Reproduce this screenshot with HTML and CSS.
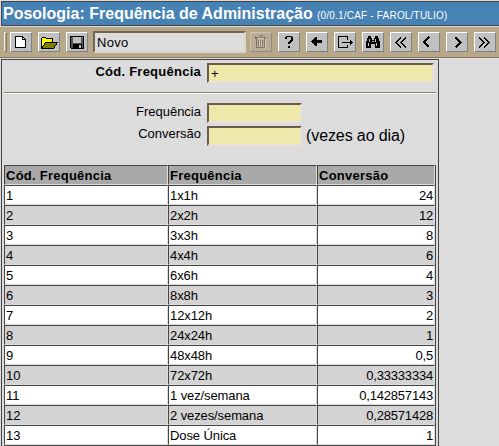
FILE: index.html
```html
<!DOCTYPE html>
<html lang="pt-BR">
<head>
<meta charset="utf-8">
<title>Posologia: Frequência de Administração</title>
<link rel="stylesheet" href="styles.css">
</head>
<body>
<header class="title"><h1>Posologia: Frequência de Administração</h1><span class="version">(0/0.1/CAF - FAROL/TULIO)</span></header>
<nav class="toolbar">
  <span class="grip"></span>
  <div class="group">
    <button class="btn" aria-label="Novo"><svg viewBox="0 0 20 18"><path d="M4.5 3.500h7l3 3v8h-10z" fill="#fff" stroke="#000"/><path d="M11.500 3.500v3h3" fill="none" stroke="#000"/></svg></button>
    <button class="btn" aria-label="Abrir"><svg viewBox="0 0 20 18"><path d="M2.500 14.500v-9l1-1h3l1 1h6v4h-6z" fill="#ff0" stroke="#000"/><path d="M2.500 15.500l4-6h12l-4 6z" fill="#808000" stroke="#000"/></svg></button>
    <button class="btn" aria-label="Salvar"><svg viewBox="0 0 20 18"><path d="M3.500 3.500h13v12h-12l-1-1z" fill="#555" stroke="#000"/><path d="M6 4h8v6H6z" fill="#c0c0c0"/><path d="M6 11h9v5H6z" fill="#000"/><path d="M12 12h2v3h-2zM15 4h1v1h-1z" fill="#c0c0c0"/></svg></button>
  </div>
  <input class="mode" value="Novo" readonly>
  <div class="group">
    <button class="btn off" aria-label="Excluir"><svg viewBox="0 0 20 18"><path d="M4 4.500h11M7.500 2.500h4M4.500 3v3M5.500 5v9.500h8V5M7.500 7v6M9.500 7v6M11.500 7v6" fill="none" stroke="#807765"/><path d="M6.500 5.500h6M8.500 7v6M10.500 7v6M14.500 6v9" fill="none" stroke="#d8cfbc"/></svg></button>
    <button class="btn" aria-label="Ajuda"><svg viewBox="0 0 20 18"><path d="M6 6V4h1V3h6v1h1v4h-1v1h-1v1h-1v1H9V9h1V8h1V7h1V4H8v2zM9 13h2v2H9z"/></svg></button>
    <button class="btn" aria-label="Voltar"><svg viewBox="0 0 20 18"><path d="M4 8h1V7h1V6h1V5h1V4h2v3h5v3h-5v3H8v-1H7v-1H6v-1H5V9H4z"/></svg></button>
    <button class="btn" aria-label="Sair"><svg viewBox="0 0 20 18"><path d="M12.500 7V3.500h-9v11h9V12M7 9.500h10" fill="none" stroke="#000"/><path d="M15 7h1v1h1v1h1v1h-1v1h-1v1h-1z"/></svg></button>
    <button class="btn" aria-label="Localizar"><svg viewBox="0 0 20 18"><path d="M5 3h3v2h1v2h2V5h1V3h3v2h1v3h1v7h-5v-4H8v4H3V8h1V5h1z"/><path d="M6 6h1v3H6zM5 10h1v3H5zM12 6h1v3h-1zM13 10h1v3h-1zM9 8h2v1H9z" fill="#c0c0c0"/></svg></button>
    <button class="btn" aria-label="Primeiro"><svg viewBox="0 0 20 18"><path d="M10 4.500l-5 5 5 5M15 4.500l-5 5 5 5" class="arrow"/></svg></button>
    <button class="btn" aria-label="Anterior"><svg viewBox="0 0 20 18"><path d="M10 4l-5 5 5 5" class="arrow"/></svg></button>
    <button class="btn" aria-label="Próximo"><svg viewBox="0 0 20 18"><path d="M8.500 4.500l5 5-5 5" class="arrow"/></svg></button>
    <button class="btn" aria-label="Último"><svg viewBox="0 0 20 18"><path d="M4 4.500l5 5-5 5M9 4.500l5 5-5 5" class="arrow"/></svg></button>
  </div>
</nav>
<main class="panel">
  <form class="form">
    <div class="field key"><label for="cod">Cód. Frequência</label><input id="cod" class="long" value="+"></div>
    <hr>
    <div class="field"><label for="freq">Frequência</label><input id="freq"></div>
    <div class="field last"><label for="conv">Conversão</label><input id="conv"><span class="hint">(vezes ao dia)</span></div>
  </form>
  <div class="grid">
    <div class="row head"><b>Cód. Frequência</b><b>Frequência</b><b>Conversão</b></div>
    <div class="row"><span>1</span><span>1x1h</span><span>24</span></div>
    <div class="row"><span>2</span><span>2x2h</span><span>12</span></div>
    <div class="row"><span>3</span><span>3x3h</span><span>8</span></div>
    <div class="row"><span>4</span><span>4x4h</span><span>6</span></div>
    <div class="row"><span>5</span><span>6x6h</span><span>4</span></div>
    <div class="row"><span>6</span><span>8x8h</span><span>3</span></div>
    <div class="row"><span>7</span><span>12x12h</span><span>2</span></div>
    <div class="row"><span>8</span><span>24x24h</span><span>1</span></div>
    <div class="row"><span>9</span><span>48x48h</span><span>0,5</span></div>
    <div class="row"><span>10</span><span>72x72h</span><span>0,33333334</span></div>
    <div class="row"><span>11</span><span>1 vez/semana</span><span>0,142857143</span></div>
    <div class="row"><span>12</span><span>2 vezes/semana</span><span>0,28571428</span></div>
    <div class="row"><span>13</span><span>Dose Única</span><span>1</span></div>
  </div>
</main>
</body>
</html>
```
FILE: styles.css
```css
* { box-sizing: border-box; }
html, body { height: 100%; }
body { margin: 0; background: #dcdcdc; color: #000; font: 13px/14px "Liberation Sans", Arial, sans-serif; overflow: hidden; }
.title { height: 25px; margin: 1px 0 0 1px; border-top: 1px solid #444; border-bottom: 1px solid #444; background: #4682b4; box-shadow: inset 1px 0 #444; color: #fff; display: flex; align-items: baseline; padding: 2px 0 0 2px; white-space: nowrap; }
h1 { margin: 0; font-size: 16px; line-height: 20px; width: 314px; }
.version { font-size: 10px; letter-spacing: .2px; }
.toolbar { height: 31px; margin: 1px 0; background: #b8a88a; border-bottom: 1px solid #8b7560; display: flex; align-items: flex-start; padding: 5px 0 0 4px; }
.grip { width: 3px; height: 20px; border: 1px solid; border-color: #eee #807765 #807765 #eee; margin-right: 3px; }
.group { display: flex; gap: 6px; }
.btn { width: 22px; height: 20px; padding: 0; background: #c0c0c0; border: 1px solid; border-color: #fff #808080 #808080 #fff; display: block; }
.btn svg { display: block; width: 20px; height: 18px; shape-rendering: crispEdges; }
.btn.off { background: #b8ad98; border-color: #ccc1ad #968a75 #968a75 #ccc1ad; }
.arrow { fill: none; stroke: #000; stroke-width: 1.8; }
input { height: 20px; width: 95px; padding: 0 0 0 2px; margin: 0; border: 2px solid; border-color: #6b5b4b #e8e0da #e8e0da #6b5b4b; background: #eee8aa; font: 13px "Liberation Sans", Arial, sans-serif; color: #000; border-radius: 0; }
.mode { width: 153px; height: 22px; margin: -1px 4px 0 5px; background: #dcdcdc; letter-spacing: .3px; border-color: #746651 #dcd4c6 #dcd4c6 #746651; }
.panel { width: 438px; height: 387px; margin: 0 0 0 1px; border: 1px solid #444; border-bottom: 0; padding: 0 2px; }
.form { height: 105px; padding-top: 3px; }
.field { display: flex; height: 20px; margin-bottom: 3px; }
.field label { width: 197px; text-align: right; padding-top: 2px; margin-right: 6px; }
.field.last label { padding-top: 1px; }
.key { margin-bottom: 9px; }
.field.key label { font-weight: bold; letter-spacing: .25px; padding-top: 2px; }
.long { width: 227px; }
hr { height: 2px; border: 0; background: #fff; border-top: 1px solid #8b8570; margin: 0 0 9px; }
.hint { font-size: 16px; line-height: 19px; letter-spacing: -.1px; margin-left: 4px; }
.grid { border-right: 1px solid #444; border-bottom: 1px solid #444; width: 432px; }
.row { display: grid; grid-template-columns: 164px 149px 118px; height: 20px; background: #fff; }
.row > * { border: 1px solid; border-color: #444 #dcdcdc #dcdcdc #444; padding: 3px 1px 0; letter-spacing: -.1px; }
.row > :last-child { text-align: right; letter-spacing: -.2px; }
.row:nth-child(odd) { background: #d3d3d3; }
.row:nth-child(even) { background: #fff; }
.row.head { background: #a9a9a9; }
.row.head > b { letter-spacing: .25px; text-align: left; }
```
